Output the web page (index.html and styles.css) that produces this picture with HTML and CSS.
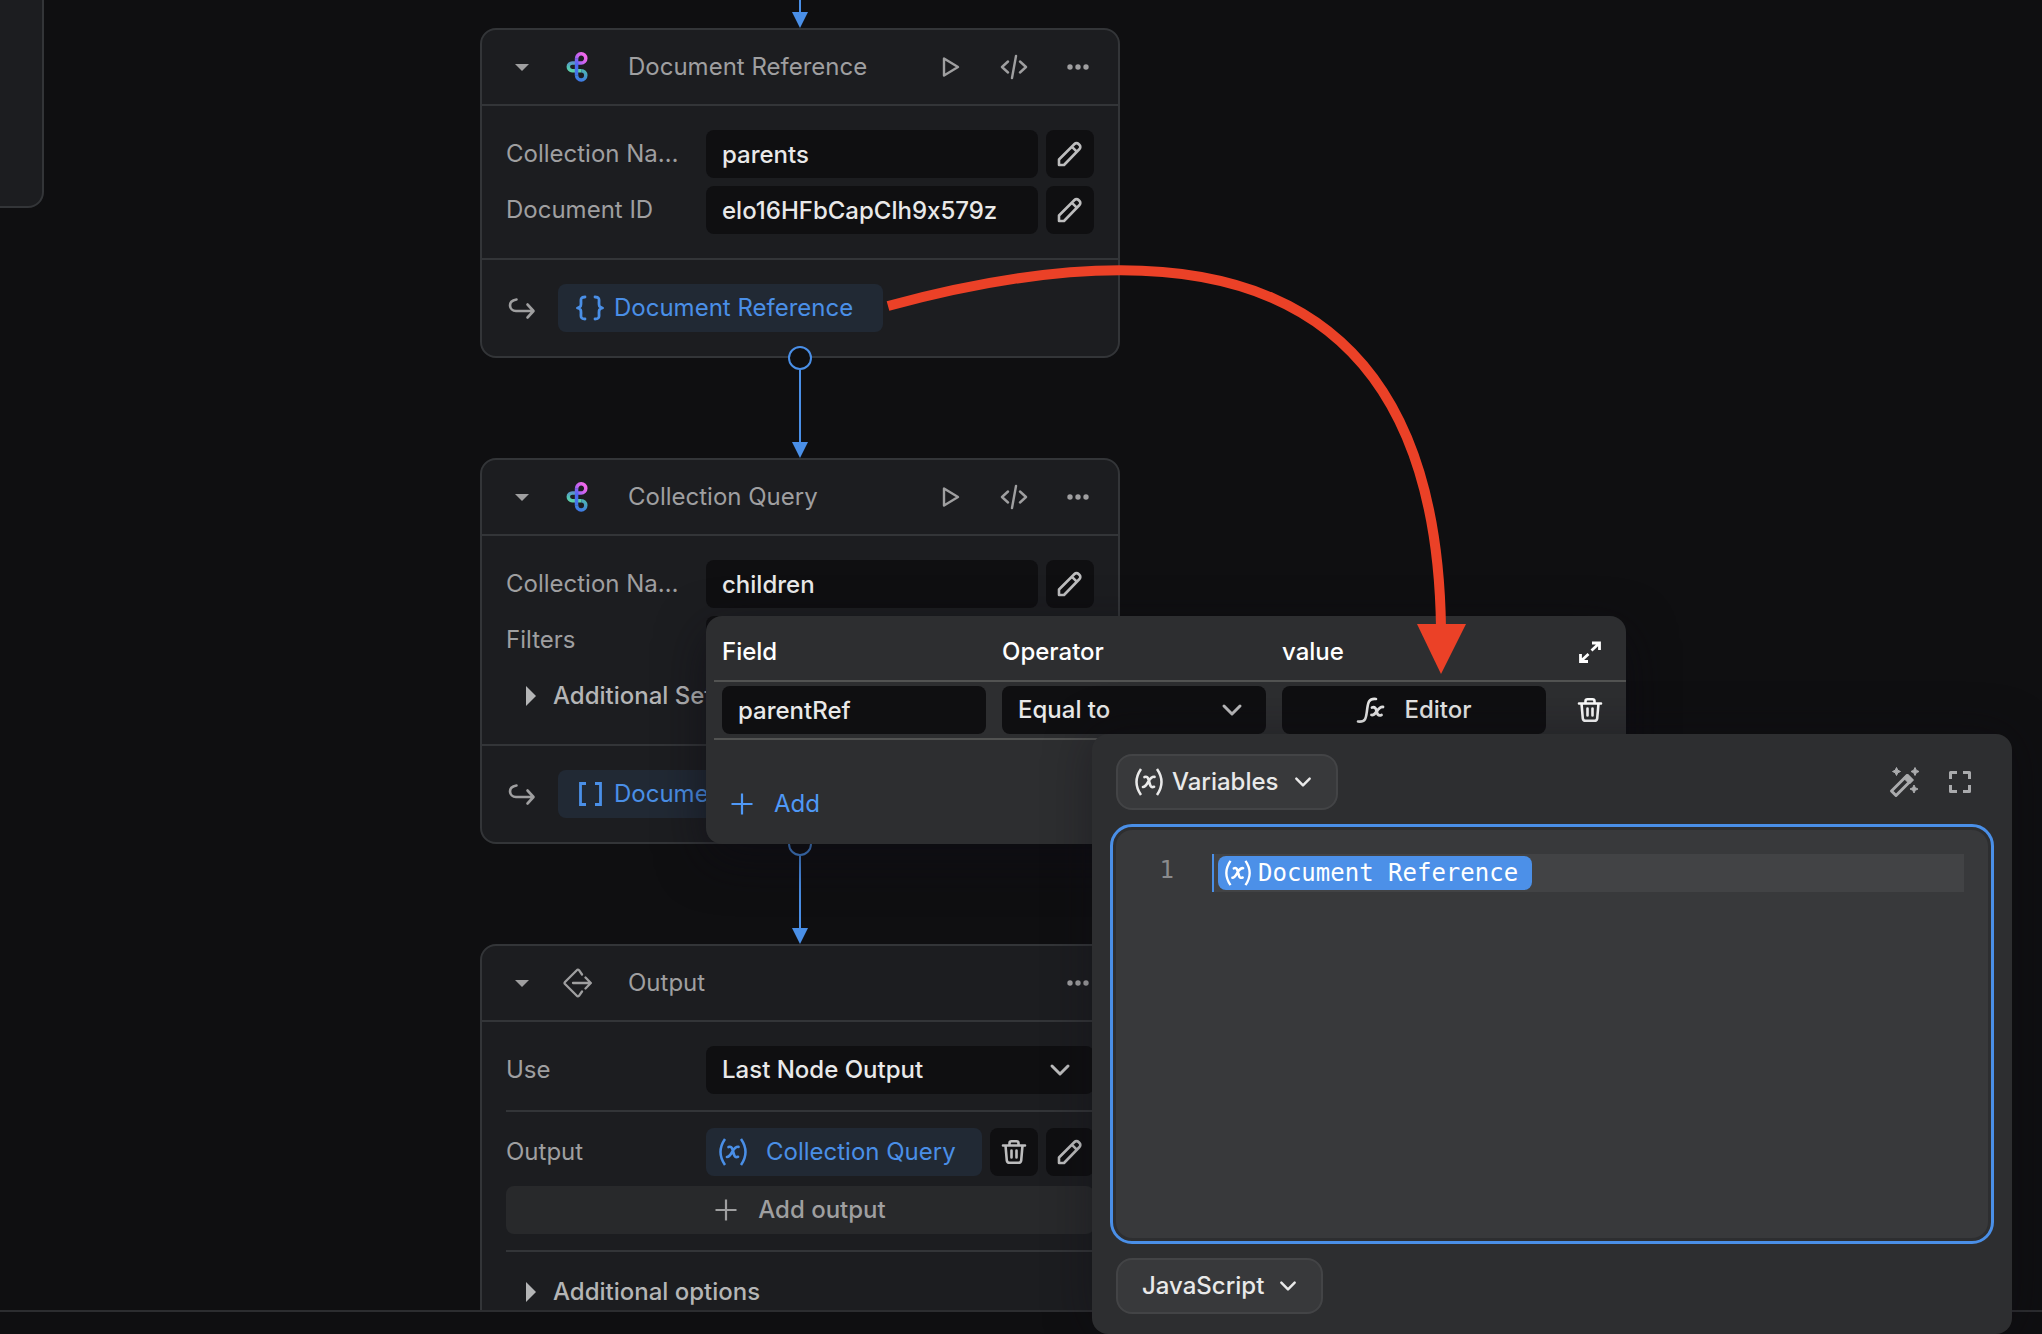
FILE: index.html
```html
<!DOCTYPE html>
<html lang="en">
<head>
<meta charset="utf-8">
<title>Workflow editor</title>
<meta name="viewport" content="width=device-width, initial-scale=1">
<link rel="stylesheet" href="styles.css">
</head>
<body class="app">
<svg class="defs" aria-hidden="true">
  <defs>
    <linearGradient id="logo-top" gradientUnits="userSpaceOnUse" x1="15" y1="12" x2="25" y2="5">
      <stop offset="0" stop-color="#6d6cf0"/><stop offset="0.5" stop-color="#c062f0"/><stop offset="1" stop-color="#f268ea"/>
    </linearGradient>
    <linearGradient id="logo-left" gradientUnits="userSpaceOnUse" x1="14" y1="11" x2="14" y2="21">
      <stop offset="0" stop-color="#5a8fc8"/><stop offset="0.5" stop-color="#52c0b4"/><stop offset="1" stop-color="#5fd3a8"/>
    </linearGradient>
    <linearGradient id="logo-bottom" gradientUnits="userSpaceOnUse" x1="24" y1="19" x2="18" y2="29">
      <stop offset="0" stop-color="#4fb8b4"/><stop offset="0.5" stop-color="#4290cc"/><stop offset="1" stop-color="#3f78e8"/>
    </linearGradient>
    <linearGradient id="logo-stem" gradientUnits="userSpaceOnUse" x1="16" y1="6" x2="16" y2="25">
      <stop offset="0" stop-color="#9a66f2"/><stop offset="0.4" stop-color="#4a66f0"/><stop offset="1" stop-color="#3f78e8"/>
    </linearGradient>
  </defs>
  <symbol id="i-caret" viewBox="0 0 20 20"><path d="M3 7h14l-7 7z" fill="currentColor"/></symbol>
  <symbol id="i-logo" viewBox="0 0 32 32">
    <g fill="none" stroke-width="3.500">
      <path d="M17 11.900H12.200a3.900 3.900 0 0 0 0 7.800H21.200" stroke="url(#logo-left)"/>
      <path d="M21.200 19.700a4.600 4.600 0 1 1-4.600 4.600" stroke="url(#logo-bottom)"/>
      <path d="M16.600 7.500a4.600 4.600 0 1 1 4.600 4.500H16" stroke="url(#logo-top)"/>
      <path d="M16.500 24.500L16.600 7.300" stroke="url(#logo-stem)"/>
    </g>
  </symbol>
  <symbol id="i-play" viewBox="0 0 24 24"><path d="M6 3.500v17L20 12z" fill="none" stroke="currentColor" stroke-width="2.400" stroke-linejoin="round"/></symbol>
  <symbol id="i-code" viewBox="0 0 28 28"><path d="M8 8.500L2 14l6 5.500M20 8.500l6 5.500-6 5.500M16 3l-4 22" fill="none" stroke="currentColor" stroke-width="2.400" stroke-linecap="round" stroke-linejoin="round"/></symbol>
  <symbol id="i-dots" viewBox="0 0 24 24"><g fill="currentColor"><circle cx="4" cy="12" r="2.700"/><circle cx="12" cy="12" r="2.700"/><circle cx="20" cy="12" r="2.700"/></g></symbol>
  <symbol id="i-pencil" viewBox="0 0 28 28"><path d="M3 25v-5.500L18.500 4a2.800 2.800 0 0 1 4 0l1 1a2.800 2.800 0 0 1 0 4L8 25zM16 6.800l5 5" fill="none" stroke="currentColor" stroke-width="2.600" stroke-linejoin="round"/></symbol>
  <symbol id="i-return" viewBox="0 0 28 28"><path d="M8.500 5.500C-1 7 1 17 8 17h17M19.500 10.500l6 6.500-6 6.500" fill="none" stroke="currentColor" stroke-width="2.600" stroke-linecap="round" stroke-linejoin="round"/></symbol>
  <symbol id="i-braces" viewBox="0 0 28 28"><path d="M9 3C4 3 5 6 5 9s0 4-3.500 5C5 15 5 16 5 19s-1 6 4 6M19 3c5 0 4 3 4 6s0 4 3.500 5C23 15 23 16 23 19s1 6-4 6" fill="none" stroke="currentColor" stroke-width="2.800" stroke-linecap="round" stroke-linejoin="round"/></symbol>
  <symbol id="i-brackets" viewBox="0 0 28 28"><path d="M10 3.500H4.500v21H10M19 3.500h5.500v21H19" fill="none" stroke="currentColor" stroke-width="2.800"/></symbol>
  <symbol id="i-output" viewBox="0 0 32 32"><path d="M22 7.500L19 3.200a1.500 1.500 0 0 0-2.200 0L5 15a1.500 1.500 0 0 0 0 2l11.800 11.800a1.500 1.500 0 0 0 2.200 0L22 24.500M13 16h17.500M25.500 10.500l5.300 5.500-5.300 5.500" fill="none" stroke="currentColor" stroke-width="2.300" stroke-linecap="round" stroke-linejoin="round"/></symbol>
  <symbol id="i-trash" viewBox="0 0 28 28"><path d="M3 7.500h22M5.500 7.500l1.300 15a2.800 2.800 0 0 0 2.700 2.300h9a2.800 2.800 0 0 0 2.700-2.300l1.300-15M9.500 7V5.300a2 2 0 0 1 2-2h5a2 2 0 0 1 2 2V7M11.500 12.500v7M16.500 12.500v7" fill="none" stroke="currentColor" stroke-width="2.600" stroke-linecap="round" stroke-linejoin="round"/></symbol>
  <symbol id="i-plus" viewBox="0 0 24 24"><path d="M12 1.500v21M1.500 12h21" fill="none" stroke="currentColor" stroke-width="2.200"/></symbol>
  <symbol id="i-chevron" viewBox="0 0 24 24"><path d="M4 8l8 8 8-8" fill="none" stroke="currentColor" stroke-width="3" stroke-linecap="round" stroke-linejoin="round"/></symbol>
  <symbol id="i-right" viewBox="0 0 12 20"><path d="M1 0v20l10-10z" fill="currentColor"/></symbol>
  <symbol id="i-var" viewBox="0 0 30 30"><path d="M7 2Q-2 15 7 28M23 2Q32 15 23 28" fill="none" stroke="currentColor" stroke-width="2.500"/><path d="M10.500 10c2.500-.8 3.500.5 4 2.500l1.500 5c.5 2 1.500 3.300 4 2.300M20.500 9.800c-3-.4-4.500 2-6 4.600s-3 5.600-5.500 5.600" fill="none" stroke="currentColor" stroke-width="2.700" stroke-linecap="round"/></symbol>
  <symbol id="i-fx" viewBox="0 0 30 30"><path d="M2 26.500c8 1 8-4 9-11s1-12.500 9-11.500" fill="none" stroke="currentColor" stroke-width="2.600" stroke-linecap="round"/><path d="M16 12.500c3-1 4 1 4.500 3.500s1.500 5.500 5 4M27 12c-5.500-1-6.500 9-11.500 8" fill="none" stroke="currentColor" stroke-width="2.800" stroke-linecap="round"/></symbol>
  <symbol id="i-expand" viewBox="0 0 24 24"><path d="M14 3h7.500V10M21 3.500l-7.500 7M2.500 14v7.500H10M3 21l7.500-7" fill="none" stroke="currentColor" stroke-width="2.800"/></symbol>
  <symbol id="i-wand" viewBox="0 0 32 32"><path d="M3.500 25L19 9.500l4.500 4.500L8 29.500z" fill="none" stroke="currentColor" stroke-width="3" stroke-linejoin="round"/><path d="M15.500 12l4-4 6 6-4 4zM8.500 1.500l1.300 2.700 2.700 1.300-2.700 1.300L8.500 9.500 7.200 6.800 4.500 5.500l2.700-1.300zM27 1.500l1.300 2.700L31 5.500l-2.700 1.300L27 9.500l-1.300-2.700L23 5.500l2.700-1.300zM26 19l1.300 2.700L30 23l-2.700 1.300L26 27l-1.300-2.700L22 23l2.700-1.300z" fill="currentColor" stroke="currentColor" stroke-width="1" stroke-linejoin="round"/></symbol>
  <symbol id="i-full" viewBox="0 0 24 24"><path d="M2.500 9V2.500H9M15 2.500h6.500V9M21.500 15v6.500H15M9 21.500H2.500V15" fill="none" stroke="currentColor" stroke-width="3" stroke-linejoin="round"/></symbol>
</svg>

<main class="canvas">
  <section class="node node-edge" aria-label="Previous node"></section>

  <svg class="wires" aria-hidden="true">
    <g stroke="#4a8fe7" stroke-width="2" fill="none">
      <path d="M800 0v14M800 370v74M800 856v74"/>
    </g>
    <g fill="#4a8fe7"><path d="M792 12h16l-8 16zM792 442h16l-8 16zM792 928h16l-8 16z"/></g>
  </svg>

  <section class="node node-docref">
    <header class="node-head">
      <button class="icon-btn" aria-label="Collapse"><svg class="ic-20"><use href="#i-caret"/></svg></button>
      <svg class="logo"><use href="#i-logo"/></svg>
      <h2 class="node-title">Document Reference</h2>
      <button class="icon-btn" aria-label="Run"><svg class="ic-24"><use href="#i-play"/></svg></button>
      <button class="icon-btn" aria-label="Code"><svg class="ic-28"><use href="#i-code"/></svg></button>
      <button class="icon-btn" aria-label="More"><svg class="ic-24"><use href="#i-dots"/></svg></button>
    </header>
    <div class="node-body">
      <div class="row"><label class="label" for="c1">Collection Name</label><input class="field" id="c1" value="parents"><button class="square" aria-label="Edit"><svg class="ic-28"><use href="#i-pencil"/></svg></button></div>
      <div class="row"><label class="label" for="c2">Document ID</label><input class="field" id="c2" value="elo16HFbCapClh9x579z"><button class="square" aria-label="Edit"><svg class="ic-28"><use href="#i-pencil"/></svg></button></div>
    </div>
    <footer class="node-foot">
      <svg class="ic-28"><use href="#i-return"/></svg>
      <button class="chip"><svg class="ic-28"><use href="#i-braces"/></svg>Document Reference</button>
    </footer>
  </section>

  <section class="node node-query">
    <header class="node-head">
      <button class="icon-btn" aria-label="Collapse"><svg class="ic-20"><use href="#i-caret"/></svg></button>
      <svg class="logo"><use href="#i-logo"/></svg>
      <h2 class="node-title">Collection Query</h2>
      <button class="icon-btn" aria-label="Run"><svg class="ic-24"><use href="#i-play"/></svg></button>
      <button class="icon-btn" aria-label="Code"><svg class="ic-28"><use href="#i-code"/></svg></button>
      <button class="icon-btn" aria-label="More"><svg class="ic-24"><use href="#i-dots"/></svg></button>
    </header>
    <div class="node-body">
      <div class="row"><label class="label" for="c3">Collection Name</label><input class="field" id="c3" value="children"><button class="square" aria-label="Edit"><svg class="ic-28"><use href="#i-pencil"/></svg></button></div>
      <div class="row"><span class="label">Filters</span><button class="field" aria-label="Edit filters"></button></div>
      <button class="disclosure"><svg class="tri"><use href="#i-right"/></svg>Additional Settings</button>
    </div>
    <footer class="node-foot">
      <svg class="ic-28"><use href="#i-return"/></svg>
      <button class="chip"><svg class="ic-28"><use href="#i-brackets"/></svg>Documents</button>
    </footer>
  </section>

  <section class="node node-output">
    <header class="node-head">
      <button class="icon-btn" aria-label="Collapse"><svg class="ic-20"><use href="#i-caret"/></svg></button>
      <svg class="logo"><use href="#i-output"/></svg>
      <h2 class="node-title">Output</h2>
      <button class="icon-btn" aria-label="More"><svg class="ic-24"><use href="#i-dots"/></svg></button>
    </header>
    <div class="node-body">
      <div class="row"><label class="label" for="use">Use</label>
        <div class="select-wrap"><select class="field" id="use"><option>Last Node Output</option></select><svg class="ic-24"><use href="#i-chevron"/></svg></div></div>
      <hr class="rule">
      <div class="row"><span class="label">Output</span>
        <button class="chip chip-var"><svg class="ic-30"><use href="#i-var"/></svg>Collection Query</button>
        <button class="square" aria-label="Delete"><svg class="ic-28"><use href="#i-trash"/></svg></button>
        <button class="square" aria-label="Edit"><svg class="ic-28"><use href="#i-pencil"/></svg></button></div>
      <button class="add-output"><svg class="ic-24"><use href="#i-plus"/></svg>Add output</button>
      <hr class="rule">
      <button class="disclosure"><svg class="tri"><use href="#i-right"/></svg>Additional options</button>
    </div>
  </section>

  <svg class="wires" aria-hidden="true">
    <g stroke="#4a8fe7" stroke-width="2" fill="#0f0f11"><circle cx="800" cy="358" r="11"/><circle cx="800" cy="844" r="11"/></g>
  </svg>
</main>
<div class="dock"></div>

<section class="filters" aria-label="Filters">
  <table class="filter-table">
    <thead><tr><th>Field</th><th>Operator</th><th>value</th><th class="tool"><button class="tool-btn" aria-label="Expand"><svg class="ic-24"><use href="#i-expand"/></svg></button></th></tr></thead>
    <tbody><tr>
      <td><input class="field" aria-label="Field" value="parentRef"></td>
      <td><div class="select-wrap"><select class="field" aria-label="Operator"><option>Equal to</option></select><svg class="ic-24"><use href="#i-chevron"/></svg></div></td>
      <td><button class="field editor-btn"><svg class="ic-30"><use href="#i-fx"/></svg>Editor</button></td>
      <td class="tool"><button class="tool-btn" aria-label="Delete filter"><svg class="ic-28"><use href="#i-trash"/></svg></button></td>
    </tr></tbody>
  </table>
  <button class="add-filter"><svg class="ic-24"><use href="#i-plus"/></svg>Add</button>
</section>

<section class="editor" aria-label="Value editor">
  <div class="editor-bar">
    <button class="pill"><span class="pill-main"><svg class="ic-30"><use href="#i-var"/></svg>Variables</span><svg class="ic-20"><use href="#i-chevron"/></svg></button>
    <div class="editor-tools">
      <button class="icon-btn" aria-label="Generate"><svg class="ic-32"><use href="#i-wand"/></svg></button>
      <button class="icon-btn" aria-label="Full screen"><svg class="ic-24"><use href="#i-full"/></svg></button>
    </div>
  </div>
  <div class="code">
    <span class="line-no">1</span>
    <div class="line"><span class="token"><svg class="ic-28"><use href="#i-var"/></svg>Document Reference</span></div>
  </div>
  <div class="editor-bar">
    <button class="pill pill-lang">JavaScript<svg class="ic-20"><use href="#i-chevron"/></svg></button>
  </div>
</section>

<svg class="annotation" aria-hidden="true">
  <path d="M888 306C1180 227 1436 256 1441 628" fill="none" stroke="#eb4127" stroke-width="10"/>
  <path d="M1417 624h49l-25 50z" fill="#eb4127"/>
</svg>
</body>
</html>
```
FILE: styles.css
```css
:root {
  --bg: #0f0f11;
  --node: #1c1d20;
  --line: #333538;
  --panel: #2d2e30;
  --muted: #9f9fa0;
  --text: #e9e9e9;
  --blue: #4a8fe7;
}

* { box-sizing: border-box; }

body {
  margin: 0;
  font-family: Inter, "Liberation Sans", sans-serif;
  font-size: 24px;
  line-height: 32px;
  font-feature-settings: "calt" 0;
  color: var(--muted);
  background: var(--bg);
}

button, input, select {
  margin: 0;
  padding: 0;
  border: 0;
  font: inherit;
  font-feature-settings: inherit;
  color: inherit;
  background: none;
}

svg { display: block; flex: none; }
.defs { position: absolute; width: 0; height: 0; }
.ic-20 { width: 20px; height: 20px; }
.ic-24 { width: 24px; height: 24px; }
.ic-28 { width: 28px; height: 28px; }
.ic-30 { width: 30px; height: 30px; }
.ic-32 { width: 32px; height: 32px; }

.app {
  position: relative;
  display: flex;
  flex-direction: column;
  height: 100vh;
  overflow: hidden;
}

.canvas { position: relative; flex: 1; overflow: hidden; }
.dock { height: 24px; border-top: 2px solid #2c2d30; }

.wires, .annotation {
  position: absolute;
  inset: 0;
  width: 100%;
  height: 100%;
  pointer-events: none;
}

/* Nodes */
.node {
  position: absolute;
  left: 480px;
  width: 640px;
  border: 2px solid var(--line);
  border-radius: 16px;
  background: var(--node);
}
.node-edge { left: -596px; top: -192px; height: 400px; }
.node-docref { top: 28px; }
.node-query { top: 458px; }
.node-output { top: 944px; }

.node-head {
  display: flex;
  align-items: center;
  height: 76px;
  padding: 0 20px;
  border-bottom: 2px solid var(--line);
}
.icon-btn {
  display: grid;
  place-items: center;
  width: 40px;
  height: 40px;
}
.node-head .icon-btn + .icon-btn { margin-left: 24px; }
.logo { width: 32px; height: 32px; margin: 0 36px 0 18px; }
.node-title { flex: 1; margin: 0; font-size: 24px; font-weight: 400; }

.node-body {
  display: flex;
  flex-direction: column;
  gap: 8px;
  padding: 24px;
}
.row { display: flex; align-items: center; gap: 8px; }
.label {
  flex: none;
  width: 192px;
  padding-right: 16px;
  overflow: hidden;
  white-space: nowrap;
  text-overflow: ellipsis;
}
.field {
  flex: 1;
  min-width: 0;
  width: 100%;
  height: 48px;
  padding: 0 16px;
  border-radius: 8px;
  font-weight: 500;
  color: var(--text);
  background: var(--bg);
}
.square {
  display: grid;
  place-items: center;
  width: 48px;
  height: 48px;
  border-radius: 8px;
  color: #bdbdbe;
  background: var(--bg);
}
.select-wrap { position: relative; flex: 1; color: #bdbdbe; }
.select-wrap .field { display: block; appearance: none; }
.select-wrap svg { position: absolute; right: 22px; top: 12px; pointer-events: none; }

.disclosure {
  display: flex;
  align-items: center;
  gap: 16px;
  height: 48px;
  padding-left: 19px;
  font-weight: 500;
  color: #b4b5b6;
}
.tri { width: 12px; height: 20px; }

.node-foot {
  display: flex;
  align-items: center;
  gap: 22px;
  padding: 24px 26px;
  border-top: 2px solid var(--line);
}
.chip {
  display: flex;
  align-items: center;
  gap: 10px;
  height: 48px;
  padding: 0 30px 0 18px;
  border-radius: 8px;
  color: var(--blue);
  background: #212934;
}
.chip-var { flex: 1; gap: 18px; padding: 0 0 0 12px; }
.rule { width: 100%; height: 2px; margin: 8px 0; border: 0; background: var(--line); }
.add-output {
  display: flex;
  align-items: center;
  justify-content: center;
  gap: 20px;
  height: 48px;
  margin-top: 2px;
  border-radius: 8px;
  font-weight: 500;
  background: #28292b;
}

/* Filters popover */
.filters {
  position: absolute;
  left: 706px;
  top: 616px;
  width: 920px;
  padding: 0 0 16px 8px;
  border-radius: 16px;
  color: #fff;
  background: var(--panel);
  box-shadow: 0 16px 48px rgb(14 12 20 / 60%);
}
.filter-table { width: 100%; table-layout: fixed; border-collapse: separate; border-spacing: 0; }
.filter-table th, .filter-table td { border-bottom: 2px solid #525352; }
.filter-table th { height: 66px; padding: 8px 8px 0; font-weight: 500; text-align: left; }
.filter-table td { padding: 4px 8px; }
.filter-table .tool { width: 72px; padding-left: 0; padding-right: 0; }
.filter-table .field { display: block; }
.filter-table .editor-btn { display: flex; align-items: center; justify-content: center; gap: 18px; }
.tool-btn { display: grid; place-items: center; width: 100%; height: 48px; }
.add-filter {
  display: flex;
  align-items: center;
  gap: 20px;
  height: 48px;
  margin-top: 40px;
  padding-left: 16px;
  color: #4f99f7;
}

/* Value editor */
.editor {
  position: absolute;
  left: 1092px;
  top: 734px;
  display: flex;
  flex-direction: column;
  gap: 20px;
  width: 920px;
  padding: 20px 24px;
  border-radius: 16px;
  color: var(--text);
  background: var(--panel);
  box-shadow: 0 0 48px rgb(14 12 20 / 40%);
}
.editor-bar { display: flex; align-items: center; justify-content: space-between; }
.editor-tools { display: flex; gap: 16px; padding-right: 8px; color: #aaabad; }
.pill {
  display: flex;
  align-items: center;
  gap: 14px;
  height: 56px;
  padding: 0 23px 0 16px;
  border: 2px solid #434446;
  border-radius: 16px;
  font-weight: 500;
  background: #38393b;
}
.pill-main { display: flex; align-items: center; gap: 8px; }
.pill-lang { padding-left: 24px; }
.code {
  display: flex;
  align-items: flex-start;
  height: 408px;
  padding: 24px 24px 24px 0;
  border-radius: 16px;
  outline: 3px solid var(--blue);
  outline-offset: 3px;
  font-family: "DejaVu Sans Mono", monospace;
  background: #38393b;
}
.line-no { width: 58px; margin-right: 38px; text-align: right; color: #8a8b8d; }
.line {
  flex: 1;
  height: 38px;
  padding: 2px 4px;
  border-left: 2px solid var(--blue);
  background: #424345;
}
.token {
  display: inline-flex;
  align-items: center;
  gap: 6px;
  height: 34px;
  padding: 0 14px 0 6px;
  border-radius: 8px;
  color: #fff;
  background: #4c90e8;
}
```
